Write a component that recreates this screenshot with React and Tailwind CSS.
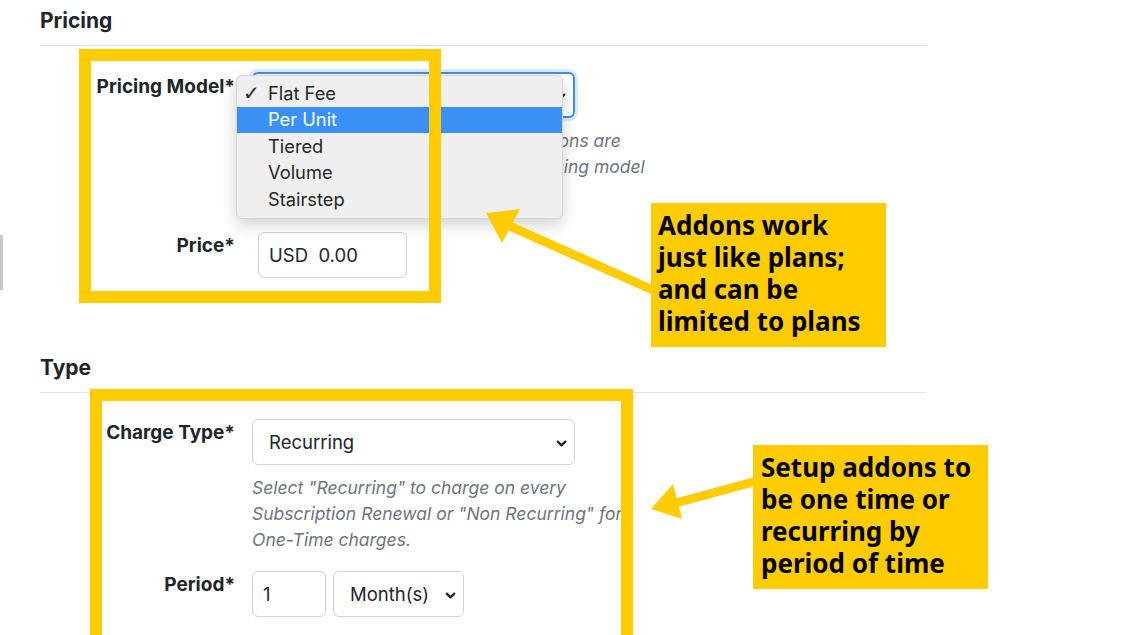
import { ChevronDown } from 'lucide-react';

const YELLOW = 'border-[#FFCC00]';

function FakeSelect({ value, focused, className }) {
    return (
        <div
            className={`flex items-center justify-between h-[46px] rounded-[6px] bg-white pl-[16px] pr-[5px] pt-[2px] text-[18.5px] text-[#212529] ${
                focused ? 'border-2 border-[#3d8ef0] shadow-[0_0_0_3px_rgba(61,142,240,0.18)]' : 'border border-[#ced4da]'
            } ${className}`}
        >
            <span>{value}</span>
            <ChevronDown className="w-[15px] h-[15px] text-[#222]" strokeWidth={3.4} />
        </div>
    );
}

const menuItems = ['Flat Fee', 'Per Unit', 'Tiered', 'Volume', 'Stairstep'];

export default function App() {
    return (
        <div className="relative w-[1126px] h-[635px] overflow-hidden bg-white font-['Inter',sans-serif] text-[#212529]">

            {/* Form */}
            <div className="pl-[40px] w-[926px]">
                <h2 className="h-[46px] pt-[7px] text-[21px] leading-[28px] font-bold border-b border-[#dfe3ec]">Pricing</h2>

                <div className="flex pt-[26px]">
                    <label className="w-[195px] text-right pt-[3px] text-[19px] leading-[24px] font-bold">Pricing Model*</label>
                    <div className="ml-[17px]">
                        <FakeSelect value="Flat Fee" focused className="w-[323px]" />
                        <p className="mt-[10px] text-[17.5px] italic leading-[26px] text-[#6c757d] whitespace-nowrap">
                            Choose how an addon is priced. Addons are<br />
                            charged according to the chosen pricing model
                        </p>
                    </div>
                </div>

                <div className="flex mt-[52px]">
                    <label className="w-[195px] text-right pt-[2px] text-[19px] leading-[24px] font-bold">Price*</label>
                    <div className="ml-[23px] w-[149px] h-[46px] flex items-center rounded-[6px] border border-[#ced4da] px-[10px] pt-[2px] text-[18.5px] whitespace-pre">
                        USD  0.00
                    </div>
                </div>

                <h2 className="mt-[69px] h-[46px] pt-[7px] text-[21px] leading-[28px] font-bold border-b border-[#dfe3ec]">Type</h2>

                <div className="flex pt-[26px]">
                    <label className="w-[195px] text-right pt-[2px] text-[19px] leading-[24px] font-bold">Charge Type*</label>
                    <div className="ml-[17px]">
                        <FakeSelect value="Recurring" className="w-[323px]" />
                        <p className="mt-[10px] text-[17.5px] italic leading-[26px] text-[#6c757d] whitespace-nowrap">
                            Select "Recurring" to charge on every<br />
                            Subscription Renewal or "Non Recurring" for<br />
                            One-Time charges.
                        </p>
                    </div>
                </div>

                <div className="flex mt-[18px]">
                    <label className="w-[195px] text-right pt-[2px] text-[19px] leading-[24px] font-bold">Period*</label>
                    <div className="ml-[17px] flex gap-[7px]">
                        <div className="w-[74px] h-[46px] flex items-center rounded-[6px] border border-[#ced4da] px-[10px] pt-[2px] text-[18.5px]">1</div>
                        <FakeSelect value="Month(s)" className="w-[131px]" />
                    </div>
                </div>
            </div>

            {/* Side edge */}
            <div className="absolute left-0 top-[235px] w-[3px] h-[55px] bg-[#c8c8c8]" />

            {/* Native dropdown menu */}
            <div className="absolute left-[236px] top-[75px] w-[327px] h-[144px] rounded-[6px] bg-[#efefef] border border-[#d6d6d6] shadow-[0_6px_16px_rgba(0,0,0,0.18)] pt-[4px] text-[18.3px] text-[#262626]">
                {menuItems.map((item, i) => (
                    <div
                        key={item}
                        className={`relative h-[26.5px] flex items-center pl-[31px] ${i === 1 ? 'bg-[#3b90f6] text-white' : ''}`}
                    >
                        {i === 0 && <span className="absolute left-[6px] font-['DejaVu_Sans',sans-serif] text-[20px]">✓</span>}
                        {item}
                    </div>
                ))}
            </div>

            {/* Annotation boxes */}
            <div className={`absolute left-[79px] top-[49px] w-[362px] h-[254px] border-[12px] ${YELLOW}`} />
            <div className={`absolute left-[90px] top-[389px] w-[543px] h-[260px] border-[12px] ${YELLOW}`} />

            {/* Arrows */}
            <svg className="absolute left-0 top-0 pointer-events-none" width="1126" height="635" viewBox="0 0 1126 635">
                <line x1="655" y1="291" x2="505" y2="224" stroke="#FFCC00" strokeWidth="9" />
                <polygon points="486,213 520,209 502,243" fill="#FFCC00" />
                <line x1="757" y1="481" x2="672" y2="504" stroke="#FFCC00" strokeWidth="9" />
                <polygon points="651,509 673,484 682,519" fill="#FFCC00" />
            </svg>

            {/* Callouts */}
            <div className="absolute left-[651px] top-[203px] w-[235px] h-[144px] bg-[#FFCC00] pl-[7px] pt-[6px] font-['Noto_Sans',sans-serif] font-bold text-[26px] leading-[32px] text-black">
                Addons work<br />just like plans;<br />and can be<br />limited to plans
            </div>
            <div className="absolute left-[753px] top-[445px] w-[235px] h-[144px] bg-[#FFCC00] pl-[8px] pt-[6px] font-['Noto_Sans',sans-serif] font-bold text-[26px] leading-[32px] text-black">
                Setup addons to<br />be one time or<br />recurring by<br />period of time
            </div>
        </div>
    );
}
